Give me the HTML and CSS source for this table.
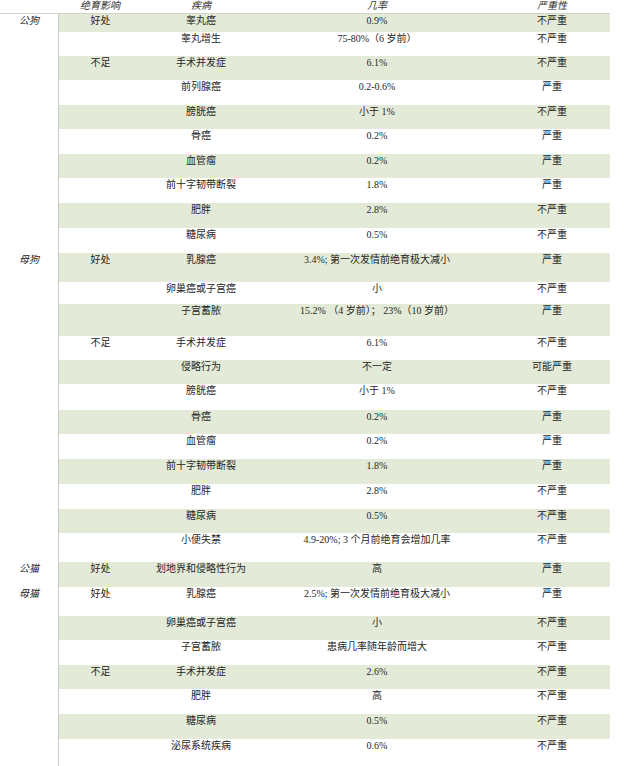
FILE: index.html
```html
<!DOCTYPE html>
<html lang="zh">
<head>
<meta charset="utf-8">
<title>绝育影响</title>
<link rel="stylesheet" href="styles.css">
</head>
<body>
<div class="table">
  <div class="head">
    <div></div>
    <div>绝育影响</div>
    <div>疾病</div>
    <div>几率</div>
    <div>严重性</div>
  </div>

  <div class="row h18 g"><div class="lab">公狗</div><div class="band"><span>好处</span><span>睾丸癌</span><span>0.9%</span><span>不严重</span></div></div>
  <div class="row h24"><div class="lab"></div><div class="band"><span></span><span>睾丸增生</span><span>75-80%（6 岁前）</span><span>不严重</span></div></div>
  <div class="row h24 g"><div class="lab"></div><div class="band"><span>不足</span><span>手术并发症</span><span>6.1%</span><span>不严重</span></div></div>
  <div class="row h25"><div class="lab"></div><div class="band"><span></span><span>前列腺癌</span><span>0.2-0.6%</span><span>严重</span></div></div>
  <div class="row h24 g"><div class="lab"></div><div class="band"><span></span><span>膀胱癌</span><span>小于 1%</span><span>不严重</span></div></div>
  <div class="row h25"><div class="lab"></div><div class="band"><span></span><span>骨癌</span><span>0.2%</span><span>严重</span></div></div>
  <div class="row h24 g"><div class="lab"></div><div class="band"><span></span><span>血管瘤</span><span>0.2%</span><span>严重</span></div></div>
  <div class="row h25"><div class="lab"></div><div class="band"><span></span><span>前十字韧带断裂</span><span>1.8%</span><span>严重</span></div></div>
  <div class="row h25 g"><div class="lab"></div><div class="band"><span></span><span>肥胖</span><span>2.8%</span><span>不严重</span></div></div>
  <div class="row h25"><div class="lab"></div><div class="band"><span></span><span>糖尿病</span><span>0.5%</span><span>不严重</span></div></div>

  <div class="row h29 g"><div class="lab">母狗</div><div class="band"><span>好处</span><span>乳腺癌</span><span>3.4%; 第一次发情前绝育极大减小</span><span>严重</span></div></div>
  <div class="row h22"><div class="lab"></div><div class="band"><span></span><span>卵巢癌或子宫癌</span><span>小</span><span>不严重</span></div></div>
  <div class="row h32 g"><div class="lab"></div><div class="band"><span></span><span>子宫蓄脓</span><span>15.2% （4 岁前）； 23%（10 岁前）</span><span>严重</span></div></div>
  <div class="row h24"><div class="lab"></div><div class="band"><span>不足</span><span>手术并发症</span><span>6.1%</span><span>不严重</span></div></div>
  <div class="row h24 g"><div class="lab"></div><div class="band"><span></span><span>侵略行为</span><span>不一定</span><span>可能严重</span></div></div>
  <div class="row h26"><div class="lab"></div><div class="band"><span></span><span>膀胱癌</span><span>小于 1%</span><span>不严重</span></div></div>
  <div class="row h24 g"><div class="lab"></div><div class="band"><span></span><span>骨癌</span><span>0.2%</span><span>严重</span></div></div>
  <div class="row h25"><div class="lab"></div><div class="band"><span></span><span>血管瘤</span><span>0.2%</span><span>严重</span></div></div>
  <div class="row h25 g"><div class="lab"></div><div class="band"><span></span><span>前十字韧带断裂</span><span>1.8%</span><span>严重</span></div></div>
  <div class="row h25"><div class="lab"></div><div class="band"><span></span><span>肥胖</span><span>2.8%</span><span>不严重</span></div></div>
  <div class="row h24 g"><div class="lab"></div><div class="band"><span></span><span>糖尿病</span><span>0.5%</span><span>不严重</span></div></div>
  <div class="row h29"><div class="lab"></div><div class="band"><span></span><span>小便失禁</span><span>4.9-20%; 3 个月前绝育会增加几率</span><span>不严重</span></div></div>

  <div class="row h25 g"><div class="lab">公猫</div><div class="band"><span>好处</span><span>划地界和侵略性行为</span><span>高</span><span>严重</span></div></div>

  <div class="row h29"><div class="lab">母猫</div><div class="band"><span>好处</span><span>乳腺癌</span><span>2.5%; 第一次发情前绝育极大减小</span><span>严重</span></div></div>
  <div class="row h24 g"><div class="lab"></div><div class="band"><span></span><span>卵巢癌或子宫癌</span><span>小</span><span>不严重</span></div></div>
  <div class="row h25"><div class="lab"></div><div class="band"><span></span><span>子宫蓄脓</span><span>患病几率随年龄而增大</span><span>不严重</span></div></div>
  <div class="row h24 g"><div class="lab"></div><div class="band"><span>不足</span><span>手术并发症</span><span>2.6%</span><span>不严重</span></div></div>
  <div class="row h25"><div class="lab"></div><div class="band"><span></span><span>肥胖</span><span>高</span><span>不严重</span></div></div>
  <div class="row h25 g"><div class="lab"></div><div class="band"><span></span><span>糖尿病</span><span>0.5%</span><span>不严重</span></div></div>
  <div class="row h27"><div class="lab"></div><div class="band"><span></span><span>泌尿系统疾病</span><span>0.6%</span><span>不严重</span></div></div>
</div>
</body>
</html>
```

FILE: styles.css
```css
html, body {
  margin: 0;
  padding: 0;
  background: #ffffff;
}

body {
  font-family: "Liberation Serif", "Noto Sans CJK SC", serif;
  font-size: 10px;
  color: #262626;
  overflow: hidden;
}

.table {
  width: 610px;
}

.head {
  display: grid;
  grid-template-columns: 58px 84px 118px 234px 116px;
  height: 13px;
  line-height: 11px;
  border-bottom: 1px solid #cfd6c6;
  font-style: italic;
  text-align: center;
  color: #333333;
}

.row {
  display: flex;
  line-height: 13px;
}

.lab {
  width: 58px;
  flex: none;
  text-align: center;
  font-style: italic;
}

.band {
  flex: 1;
  display: grid;
  grid-template-columns: 83px 118px 234px 116px;
  border-left: 1px solid #c8c8c8;
  text-align: center;
  white-space: nowrap;
}

.g .band {
  background: #e3ebd8;
}

.h18 { height: 18px; }
.h22 { height: 22px; }
.h24 { height: 24px; }
.h25 { height: 25px; }
.h26 { height: 26px; }
.h27 { height: 27px; }
.h29 { height: 29px; }
.h32 { height: 32px; }
```
